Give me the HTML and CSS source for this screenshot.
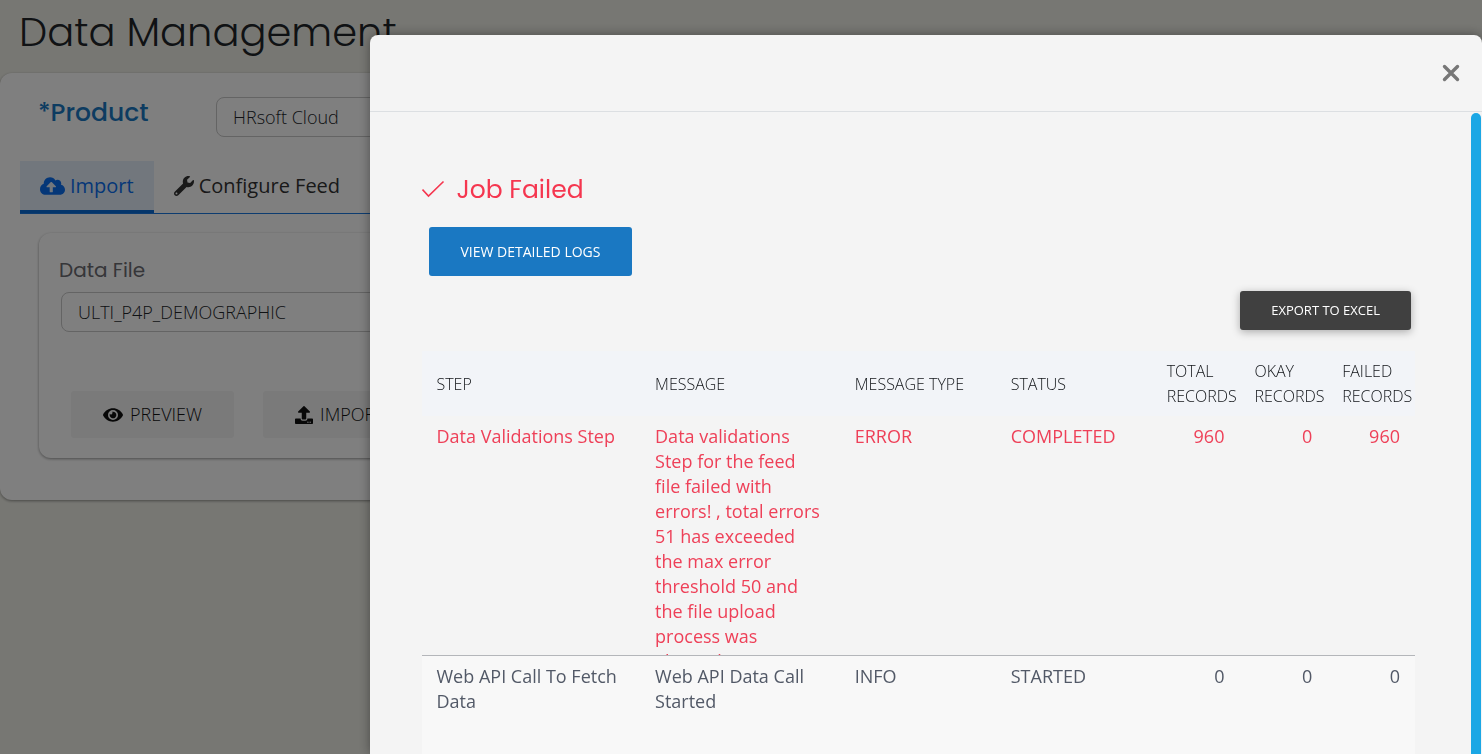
FILE: index.html
```html
<!DOCTYPE html>
<html lang="en">
<head>
<meta charset="utf-8">
<title>Data Management</title>
<link rel="stylesheet" href="styles.css">
</head>
<body>
<main class="page">
  <h1 class="page-title">Data Management</h1>
  <section class="card">
    <div class="product-row">
      <label class="product-label" for="product">*Product</label>
      <select class="field product-field" id="product"><option>HRsoft Cloud</option></select>
    </div>
    <nav class="tabs">
      <a class="tab tab-active" href="#import">
        <svg class="tab-icon" width="25" height="20" viewBox="0 0 640 512" fill="currentColor" aria-hidden="true"><path d="M537.600 226.600c4.100-10.700 6.400-22.400 6.400-34.600 0-53-43-96-96-96-19.700 0-38.100 6-53.300 16.200C367 64.200 315.300 32 256 32c-88.400 0-160 71.600-160 160 0 2.700.1 5.400.2 8.100C40.200 219.800 0 273.200 0 336c0 79.500 64.500 144 144 144h368c70.700 0 128-57.300 128-128 0-61.900-44-113.600-102.400-125.400zM393.400 288H328v112c0 8.800-7.200 16-16 16h-48c-8.800 0-16-7.200-16-16V288h-65.400c-14.300 0-21.400-17.200-11.300-27.300l105.400-105.400c6.200-6.200 16.400-6.200 22.600 0l105.400 105.400c10.100 10.100 2.900 27.300-11.300 27.300z"/></svg>
        <span>Import</span>
      </a>
      <a class="tab" href="#configure">
        <svg class="tab-icon" width="20" height="20" viewBox="0 0 512 512" fill="currentColor" aria-hidden="true"><path d="M507.730 109.100c-2.240-9.030-13.540-12.090-20.120-5.510l-74.360 74.360-67.880-11.310-11.310-67.880 74.360-74.360c6.620-6.620 3.430-17.900-5.660-20.160-47.380-11.740-99.550.91-136.580 37.930-39.640 39.640-50.550 97.100-34.050 147.200L18.740 402.760c-24.990 24.990-24.990 65.510 0 90.500 24.990 24.990 65.510 24.990 90.500 0l213.210-213.210c50.120 16.710 107.470 5.680 147.370-34.220 37.070-37.070 49.700-89.320 37.910-136.730zM64 472c-13.250 0-24-10.750-24-24 0-13.260 10.750-24 24-24s24 10.740 24 24c0 13.250-10.750 24-24 24z"/></svg>
        <span>Configure Feed</span>
      </a>
    </nav>
    <div class="panel">
      <label class="file-label" for="data-file">Data File</label>
      <select class="field file-field" id="data-file"><option>ULTI_P4P_DEMOGRAPHIC</option></select>
      <div class="actions">
        <button class="action" type="button">
          <svg width="20" height="18" viewBox="0 0 576 512" fill="currentColor" aria-hidden="true"><path d="M572.520 241.400C518.290 135.590 410.930 64 288 64S57.680 135.640 3.480 241.410a32.350 32.350 0 0 0 0 29.190C57.710 376.410 165.070 448 288 448s230.320-71.640 284.520-177.410a32.350 32.350 0 0 0 0-29.190zM288 400a144 144 0 1 1 144-144 143.930 143.930 0 0 1-144 144zm0-240a95.310 95.310 0 0 0-25.310 3.790 47.850 47.850 0 0 1-66.900 66.900A95.780 95.780 0 1 0 288 160z"/></svg>
          <span>PREVIEW</span>
        </button>
        <button class="action" type="button">
          <svg width="18" height="18" viewBox="0 0 512 512" fill="currentColor" aria-hidden="true"><path d="M296 384h-80c-13.300 0-24-10.700-24-24V192h-87.700c-17.800 0-26.700-21.500-14.100-34.100L242.300 5.700c7.500-7.500 19.800-7.500 27.300 0l152.200 152.200c12.600 12.600 3.700 34.100-14.100 34.100H320v168c0 13.300-10.700 24-24 24zm216-8v112c0 13.300-10.700 24-24 24H24c-13.300 0-24-10.700-24-24V376c0-13.300 10.700-24 24-24h136v8c0 30.900 25.100 56 56 56h80c30.900 0 56-25.100 56-56v-8h136c13.300 0 24 10.700 24 24zm-124 88c0-11-9-20-20-20s-20 9-20 20 9 20 20 20 20-9 20-20zm64 0c0-11-9-20-20-20s-20 9-20 20 9 20 20 20 20-9 20-20z"/></svg>
          <span>IMPORT</span>
        </button>
      </div>
    </div>
  </section>
</main>

<div class="overlay">
  <section class="modal" role="dialog" aria-modal="true" aria-labelledby="job-title">
    <header class="modal-header">
      <button class="close" type="button" aria-label="Close">
        <svg width="18" height="18" viewBox="0 0 18 18" aria-hidden="true"><path d="M2.500 2.500 15.500 15.500M15.500 2.500 2.500 15.500" fill="none" stroke="currentColor" stroke-width="3.400" stroke-linecap="round"/></svg>
      </button>
    </header>
    <div class="modal-body">
      <h2 class="job-title" id="job-title">
        <svg width="24" height="20" viewBox="0 0 24 20" aria-hidden="true"><path d="M0.500 9.500 6.500 16 21.500 1.500" fill="none" stroke="currentColor" stroke-width="1.600"/></svg>
        <span>Job Failed</span>
      </h2>
      <button class="logs" type="button">VIEW DETAILED LOGS</button>
      <div class="export-row"><button class="export" type="button">EXPORT TO EXCEL</button></div>
      <table class="log-table">
        <colgroup><col class="col-step"><col class="col-message"><col class="col-type"><col class="col-type"><col class="col-count"><col class="col-count"><col class="col-count"></colgroup>
        <thead>
          <tr><th>STEP</th><th>MESSAGE</th><th>MESSAGE TYPE</th><th>STATUS</th><th>TOTAL RECORDS</th><th>OKAY RECORDS</th><th>FAILED RECORDS</th></tr>
        </thead>
        <tbody>
          <tr class="row-error">
            <td>Data Validations Step</td>
            <td><div class="clip">Data validations Step for the feed file failed with errors! , total errors 51 has exceeded the max error threshold 50 and the file upload process was aborted.</div></td>
            <td>ERROR</td><td>COMPLETED</td><td class="num">960</td><td class="num">0</td><td class="num">960</td>
          </tr>
          <tr class="row-info">
            <td>Web API Call To Fetch Data</td><td><div class="clip">Web API Data Call Started</div></td>
            <td>INFO</td><td>STARTED</td><td class="num">0</td><td class="num">0</td><td class="num">0</td>
          </tr>
        </tbody>
      </table>
    </div>
    <div class="scroll-thumb"></div>
  </section>
</div>
</body>
</html>
```
FILE: styles.css
```css
* { box-sizing: border-box; }

body {
  margin: 0;
  height: 100vh;
  overflow: hidden;
  background: #efefe7;
  color: #212529;
  font-family: "Open Sans", "Noto Sans", sans-serif;
  font-size: 18px;
  line-height: 25px;
}

button, select { font: inherit; color: inherit; cursor: pointer; }

.page-title {
  margin: 0;
  padding: 2px 19px 11px;
  font: 300 40px/60px Poppins, Inter, sans-serif;
}

.card {
  padding: 24px 20px 42px;
  border-radius: 12px;
  background: #fff;
  box-shadow: 0 1px 3px rgba(0, 0, 0, 0.4);
}

.product-row {
  display: flex;
  align-items: flex-start;
  padding-left: 18px;
}

.product-label {
  width: 178px;
  color: #1a78c2;
  font: 500 25px/32px Poppins, Inter, sans-serif;
}

.field {
  appearance: none;
  height: 40px;
  padding: 0 16px;
  border: 1px solid #c8c8c8;
  border-radius: 8px;
  background: #fff;
  color: #212529;
  font-weight: 300;
}

.product-field { width: 400px; }

.tabs {
  display: flex;
  margin-top: 24px;
  border-bottom: 1px solid #1a78e0;
}

.tab {
  display: flex;
  align-items: center;
  gap: 5px;
  height: 52px;
  padding: 0 20px;
  border-bottom: 3px solid transparent;
  color: #333;
  font-size: 20px;
  text-decoration: none;
}

.tab-active {
  border-bottom-color: #0b6cd7;
  background: #e4eefa;
  color: #0b6ff0;
}

.panel {
  margin: 19px 19px 0;
  padding: 24px 20px 20px;
  border-radius: 12px;
  box-shadow: 0 1px 3px rgba(0, 0, 0, 0.4);
}

.file-label {
  display: block;
  color: #6c6c72;
  font: 400 20px/26px Poppins, Inter, sans-serif;
}

.file-field {
  width: 600px;
  margin: 9px 2px 0;
}

.actions {
  display: flex;
  gap: 29px;
  padding: 59px 12px 0;
}

.action {
  display: flex;
  align-items: center;
  gap: 7px;
  height: 47px;
  padding: 0 32px;
  border: 0;
  border-radius: 3px;
  background: #f4f4f4;
  color: #111;
  font-size: 18px;
  font-weight: 300;
}

.overlay {
  position: fixed;
  inset: 0;
  background: rgba(0, 0, 0, 0.5);
}

.modal {
  position: absolute;
  top: 35px;
  right: 0;
  bottom: 0;
  width: calc(75% + 1px);
  overflow: hidden;
  border-radius: 8px 8px 0 0;
  background: #f4f4f4;
  box-shadow: 0 0 12px rgba(0, 0, 0, 0.4);
}

.modal-header {
  display: flex;
  justify-content: flex-end;
  align-items: center;
  height: 77px;
  padding-right: 22px;
  border-bottom: 1px solid #dcdfe2;
}

.close {
  display: flex;
  padding: 0;
  border: 0;
  background: none;
  color: #777;
}

.modal-body {
  padding: 62px 67px 0 52px;
}

.job-title {
  display: flex;
  align-items: center;
  gap: 11px;
  margin: 0;
  color: #f5364f;
  font: 400 25px/32px Poppins, Inter, sans-serif;
}

.logs, .export {
  border: 0;
  border-radius: 3px;
  padding: 0 32px;
  color: #fff;
  font-weight: 500;
}

.logs {
  display: block;
  height: 49px;
  margin: 21px 0 0 7px;
  background: #1a78c2;
  font-size: 14px;
}

.export-row {
  display: flex;
  justify-content: flex-end;
  padding: 15px 4px 21px 0;
}

.export {
  height: 39px;
  padding: 0 31px;
  background: #404040;
  box-shadow: 0 2px 8px rgba(0, 0, 0, 0.3);
  font-size: 13px;
}

.log-table {
  width: 100%;
  table-layout: fixed;
  border-collapse: collapse;
}

.col-step { width: 22%; }
.col-message { width: 20.1%; }
.col-type { width: 15.7%; }

.log-table th {
  padding: 8px 0 7px 15px;
  background: #f2f4f8;
  color: #111418;
  font-size: 16px;
  font-weight: 300;
  text-align: left;
}

.log-table td {
  height: 239px;
  padding: 8px 15px 0;
  border-bottom: 1px solid #b4b6ba;
  vertical-align: top;
}

.clip {
  height: 231px;
  overflow: hidden;
}

.row-error { color: #ee4058; }
.row-info { background: #f8f8f8; color: #525967; }

.log-table .num { text-align: right; }

.scroll-thumb {
  position: absolute;
  top: 78px;
  right: 1px;
  bottom: 0;
  width: 10px;
  border-radius: 5px 5px 0 0;
  background: #1ba7e5;
}
```
